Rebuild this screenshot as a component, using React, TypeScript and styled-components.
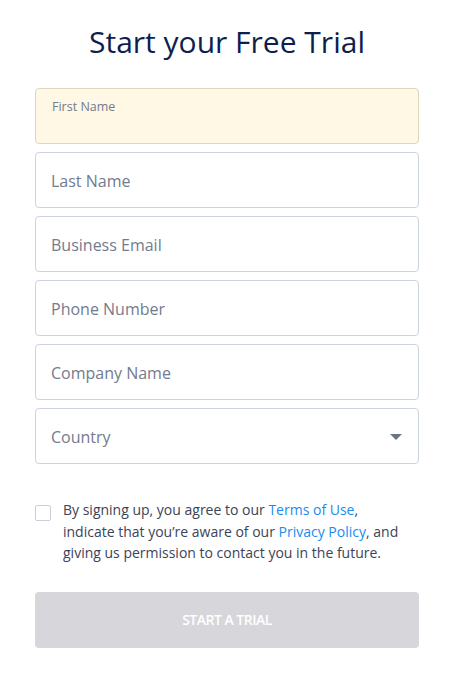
import styled, { createGlobalStyle } from "styled-components";

const GlobalStyle = createGlobalStyle`
  body {
    margin: 0;
    background: #ffffff;
    font-family: "Open Sans", "Noto Sans", sans-serif;
  }
`;

const Page = styled.div`
  width: 455px;
  padding: 21px 36px 0 35px;
  box-sizing: border-box;
`;

const Title = styled.h1`
  margin: 0 0 26px;
  text-align: center;
  font-size: 30px;
  font-weight: 400;
  line-height: 41px;
  color: #0c1f4d;
`;

const Fields = styled.div`
  display: flex;
  flex-direction: column;
  gap: 8px;
`;

const Field = styled.div<{ $filled?: boolean }>`
  position: relative;
  height: 56px;
  box-sizing: border-box;
  border: 1px solid ${(p) => (p.$filled ? "#ddd7bd" : "#ccd3de")};
  background: ${(p) => (p.$filled ? "#fef8e5" : "#ffffff")};
  border-radius: 4px;
  display: flex;
  align-items: center;
  padding: 1px 15px 0;
`;

const Placeholder = styled.span`
  font-size: 16px;
  color: #737b8e;
`;

const FloatLabel = styled.span`
  position: absolute;
  top: 9px;
  left: 16px;
  font-size: 12.5px;
  color: #737b8e;
`;

const Caret = styled.span`
  position: absolute;
  right: 16px;
  top: 25px;
  width: 0;
  height: 0;
  border-left: 6px solid transparent;
  border-right: 6px solid transparent;
  border-top: 6px solid #6b7385;
`;

const Consent = styled.label`
  display: flex;
  align-items: flex-start;
  gap: 12px;
  margin-top: 35px;
`;

const Box = styled.span`
  flex: none;
  width: 16px;
  height: 16px;
  margin-top: 6px;
  box-sizing: border-box;
  border: 1px solid #c9ced9;
  border-radius: 2px;
  background: #ffffff;
`;

const ConsentText = styled.p`
  margin: 0;
  max-width: 340px;
  font-size: 14px;
  line-height: 21.5px;
  color: #3b4358;
`;

const Link = styled.a`
  color: #1a8cf0;
  text-decoration: none;
`;

const Submit = styled.button`
  display: block;
  width: 100%;
  height: 56px;
  margin-top: 28px;
  border: none;
  border-radius: 4px;
  background: #d6d6db;
  color: #ffffff;
  font-family: "Open Sans", "Noto Sans", sans-serif;
  font-size: 14px;
  font-weight: 600;
  letter-spacing: -0.5px;
  text-transform: uppercase;
`;

const fields = ["Last Name", "Business Email", "Phone Number", "Company Name"];

const App = () => {
  return (
    <Page>
      <GlobalStyle />
      <Title>Start your Free Trial</Title>
      <Fields>
        <Field $filled>
          <FloatLabel>First Name</FloatLabel>
        </Field>
        {fields.map((f) => (
          <Field key={f}>
            <Placeholder>{f}</Placeholder>
          </Field>
        ))}
        <Field>
          <Placeholder>Country</Placeholder>
          <Caret />
        </Field>
      </Fields>
      <Consent>
        <Box />
        <ConsentText>
          By signing up, you agree to our <Link>Terms of Use</Link>, indicate
          that you’re aware of our <Link>Privacy Policy</Link>, and giving us
          permission to contact you in the future.
        </ConsentText>
      </Consent>
      <Submit>Start a Trial</Submit>
    </Page>
  );
};

export default App;
